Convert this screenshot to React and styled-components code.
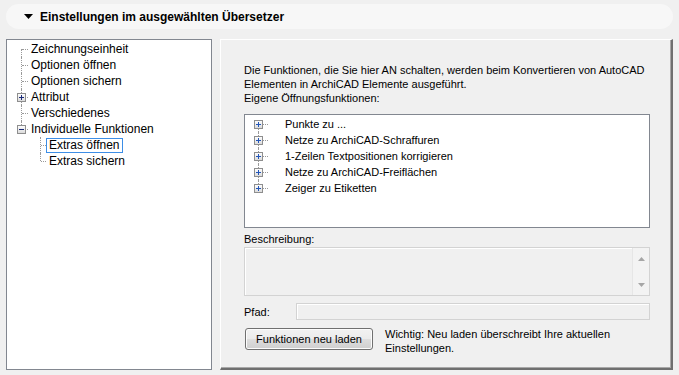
import React from 'react'
import styled, { createGlobalStyle } from 'styled-components'

const GlobalStyle = createGlobalStyle`
	body {
		margin: 0;
		background: #f0f0f0;
		font-family: "Liberation Sans", Arial, sans-serif;
		color: #000;
	}
	* { box-sizing: border-box; }
`

export const Page = styled.div`
	width: 679px;
	height: 375px;
	display: flex;
	flex-direction: column;
	padding: 4px 6px 5px 6px;
`
export const Header = styled.div`
	height: 25px;
	flex: none;
	display: flex;
	align-items: center;
	gap: 7px;
	padding-left: 18px;
	border-radius: 13px;
	background: #f7f7f7;
	font-size: 12px;
	font-weight: bold;
`
export const Body = styled.div`
	flex: 1;
	display: flex;
	gap: 8px;
	margin-top: 10px;
`
export const TreePanel = styled.div`
	width: 206px;
	flex: none;
	background: #fff;
	border: 1px solid #828790;
	padding-top: 1px;
	font-size: 12px;
`
export const Row = styled.div`
	height: 16px;
	display: flex;
	align-items: center;
	white-space: nowrap;
`
export const Branch = styled.span`
	position: relative;
	flex: none;
	align-self: stretch;
	width: ${p => p.$w}px;
	margin-left: ${p => p.$x}px;
	&::before {
		content: '';
		position: absolute;
		left: 0;
		top: ${p => (p.$first ? '8px' : '0')};
		bottom: ${p => (p.$last ? '8px' : '0')};
		border-left: 1px dotted #9a9a9a;
		display: ${p => (p.$first && p.$last ? 'none' : 'block')};
	}
	&::after {
		content: '';
		position: absolute;
		left: 1px;
		right: 0;
		top: 8px;
		border-top: 1px dotted #9a9a9a;
	}
`
export const Toggle = styled.svg`
	position: absolute;
	left: -4px;
	top: 4px;
	z-index: 1;
`
export const Label = styled.span`
	margin-left: ${p => p.$gap || 0}px;
	padding: 0 2px;
	line-height: 13px;
	border: 1px solid ${p => (p.$selected ? '#3d8ee6' : 'transparent')};
`
export const Settings = styled.div`
	flex: 1;
	display: flex;
	flex-direction: column;
	padding: 23px 21px 0 23px;
	border-top: 1px solid #fff;
	border-left: 1px solid #fff;
	border-right: 2px solid #6f6f6f;
	border-bottom: 2px solid #6f6f6f;
	box-shadow: inset -1px -1px 0 #a8a8a8;
	font-size: 11px;
`
export const Text = styled.div`
	line-height: 14px;
	margin-top: ${p => p.$mt || 0}px;
`
export const ListBox = styled.div`
	height: 114px;
	margin-top: 9px;
	background: #fff;
	border: 1px solid #828790;
	padding-top: 1px;
`
export const FieldBox = styled.div`
	height: ${p => p.$h}px;
	flex: ${p => (p.$grow ? 1 : 'none')};
	display: flex;
	justify-content: flex-end;
	background: #f0f0f0;
	border: 1px solid #d3d3d3;
	box-shadow: inset 1px 1px 0 #fff;
	margin-top: ${p => p.$mt || 0}px;
`
export const ScrollBar = styled.div`
	width: 17px;
	display: flex;
	flex-direction: column;
	justify-content: space-between;
	align-items: center;
	padding: 9px 0 8px;
	background: #f3f3f3;
	border-left: 1px solid #e6e6e6;
`
export const FieldRow = styled.div`
	display: flex;
	align-items: center;
	margin-top: 7px;
`
export const FieldLabel = styled.span`
	width: 52px;
	flex: none;
`
export const ActionRow = styled.div`
	display: flex;
	align-items: flex-start;
	gap: 12px;
	margin-top: 7px;
	padding-left: 1px;
`
export const Button = styled.button`
	width: 128px;
	height: 22px;
	flex: none;
	margin-top: 1px;
	border: 1px solid #707070;
	border-radius: 3px;
	background: linear-gradient(#f2f2f2 0%, #ebebeb 50%, #dddddd 51%, #cfcfcf 100%);
	box-shadow: inset 0 0 0 1px #fcfcfc;
	font-family: inherit;
	font-size: 11px;
	color: #000;
	padding: 0;
`

const ExpandBox = ({ open, color = '#1c3f94', left = -4 }) => (
	<Toggle width="9" height="9" viewBox="0 0 9 9" style={{ left }}>
		<defs>
			<linearGradient id="tg" x1="0" y1="0" x2="0" y2="1">
				<stop offset="0" stopColor="#ffffff" />
				<stop offset="1" stopColor="#d9d9d9" />
			</linearGradient>
		</defs>
		<rect x="0.5" y="0.5" width="8" height="8" fill="url(#tg)" stroke="#8e8e8e" />
		<path d="M2 4.5h5" stroke={color} strokeWidth="1" />
		{!open && <path d="M4.5 2v5" stroke={color} strokeWidth="1" />}
	</Toggle>
)

const Arrow = ({ down }) => (
	<svg width="7" height="4" viewBox="0 0 7 4">
		<path d={down ? 'M0 0h7L3.5 4z' : 'M0 4h7L3.5 0z'} fill="#a6a6a6" />
	</svg>
)

const sidebar = [
	{ text: 'Zeichnungseinheit', level: 0 },
	{ text: 'Optionen öffnen', level: 0 },
	{ text: 'Optionen sichern', level: 0 },
	{ text: 'Attribut', level: 0, toggle: 'closed' },
	{ text: 'Verschiedenes', level: 0 },
	{ text: 'Individuelle Funktionen', level: 0, toggle: 'open', last: true },
	{ text: 'Extras öffnen', level: 1, first: true, selected: true },
	{ text: 'Extras sichern', level: 1, last: true }
]

const functions = [
	'Punkte zu ...',
	'Netze zu ArchiCAD-Schraffuren',
	'1-Zeilen Textpositionen korrigieren',
	'Netze zu ArchiCAD-Freiflächen',
	'Zeiger zu Etiketten'
]

const App = () => {
	return (
		<Page>
			<GlobalStyle />
			<Header>
				<svg width="9" height="5" viewBox="0 0 9 5">
					<path d="M0 0h9L4.5 5z" fill="#000" />
				</svg>
				Einstellungen im ausgewählten Übersetzer
			</Header>
			<Body>
				<TreePanel>
					{sidebar.map((item, i) => (
						<Row key={item.text}>
							<Branch
								$x={item.level ? 33 : 14}
								$w={item.level ? 6 : 7}
								$first={item.level ? false : i === 0}
								$last={item.last}
							>
								{item.toggle && <ExpandBox open={item.toggle === 'open'} color="#1a2a78" />}
							</Branch>
							<Label $selected={item.selected}>{item.text}</Label>
						</Row>
					))}
				</TreePanel>
				<Settings>
					<Text>
						Die Funktionen, die Sie hier AN schalten, werden beim Konvertieren von AutoCAD
						<br />
						Elementen in ArchiCAD Elemente ausgeführt.
						<br />
						Eigene Öffnungsfunktionen:
					</Text>
					<ListBox>
						{functions.map((name, i) => (
							<Row key={name}>
								<Branch $x={13} $w={10} $first={i === 0} $last={i === functions.length - 1}>
									<ExpandBox color="#2356b8" />
								</Branch>
								<Label $gap={14}>{name}</Label>
							</Row>
						))}
					</ListBox>
					<Text $mt={4}>Beschreibung:</Text>
					<FieldBox $h={49} $mt={1}>
						<ScrollBar>
							<Arrow />
							<Arrow down />
						</ScrollBar>
					</FieldBox>
					<FieldRow>
						<FieldLabel>Pfad:</FieldLabel>
						<FieldBox $h={17} $grow />
					</FieldRow>
					<ActionRow>
						<Button>Funktionen neu laden</Button>
						<Text>
							Wichtig: Neu laden überschreibt Ihre aktuellen
							<br />
							Einstellungen.
						</Text>
					</ActionRow>
				</Settings>
			</Body>
		</Page>
	)
}

export default App
